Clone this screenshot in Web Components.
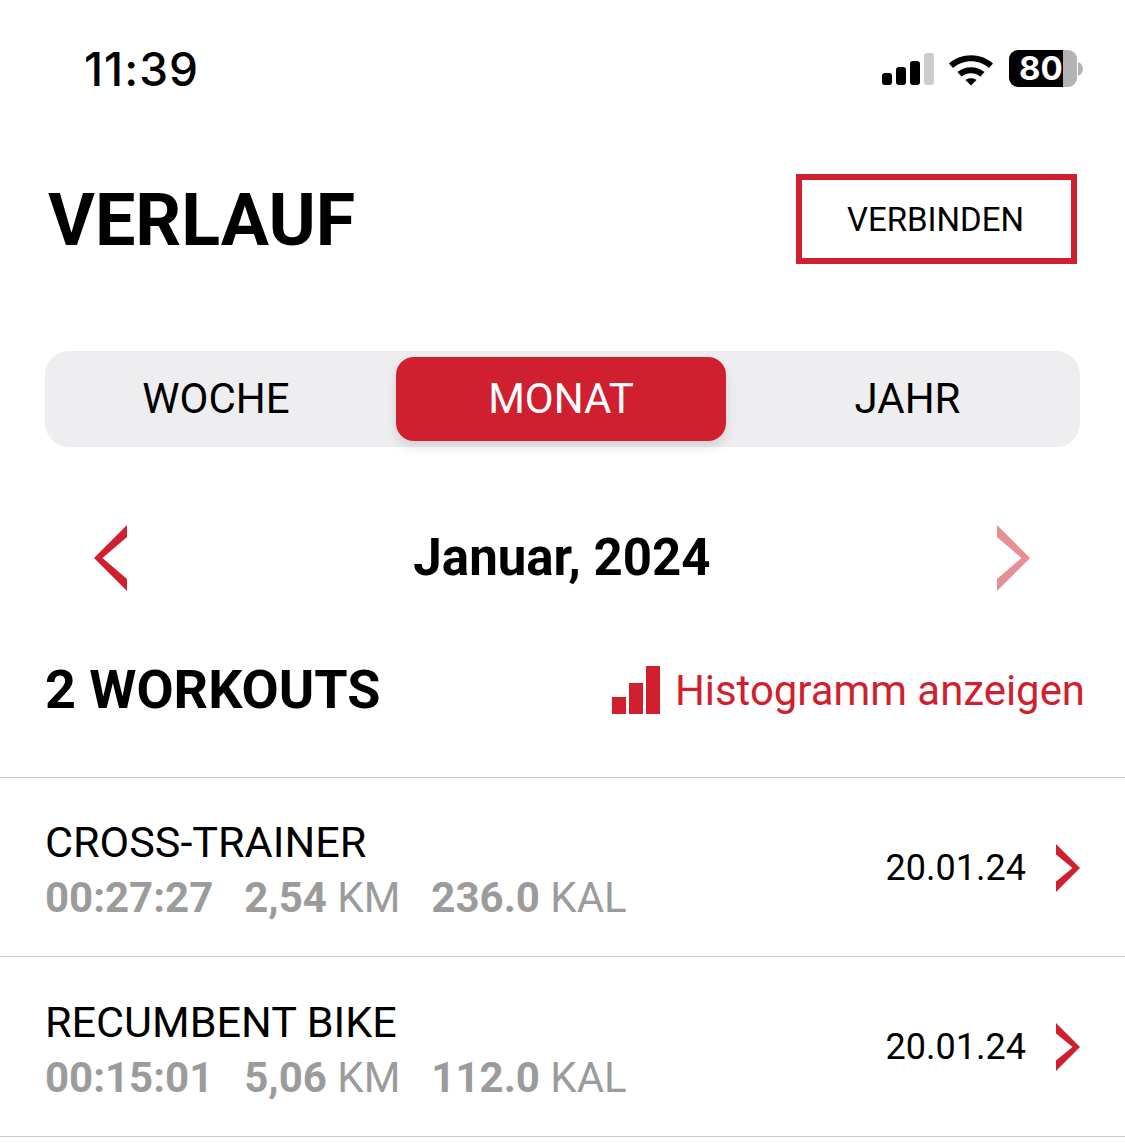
<!doctype html>
<html><head><meta charset="utf-8"><style>
html,body{margin:0;padding:0;background:#fff}
body{font-family:Roboto,sans-serif;color:#000;width:1125px;height:1144px;overflow:hidden}
</style></head><body>
<app-page></app-page>
<script>
const RED='#d01f2f';
const chev=(dir,op,h,v,i)=>{const w=h/2;const d=dir==='l'?`M${w} 0 L0 ${w} L${w} ${h} L${w} ${h-v} L${i} ${w} L${w} ${v}Z`:`M0 0 L${w} ${w} L0 ${h} L0 ${h-v} L${w-i} ${w} L0 ${v}Z`;return `<svg width="${w}" height="${h}" viewBox="0 0 ${w} ${h}" style="display:block;opacity:${op}"><path d="${d}" fill="${RED}"/></svg>`};
function def(name,html){customElements.define(name,class extends HTMLElement{constructor(){super();this.attachShadow({mode:'open'}).innerHTML=typeof html==='function'?html(this):html}})}
def('status-bar',`<style>:host{display:flex;box-sizing:border-box;height:140px;padding:44px 42px 0 84px;justify-content:space-between;align-items:flex-start}
.t{font:500 46px/50px Inter,sans-serif;letter-spacing:1px;color:#000}
.r{display:flex;align-items:center;margin-top:6px}
.bat{position:relative;width:68px;height:37px;border-radius:9px;background:linear-gradient(90deg,#000 0 54px,#b3b3b3 54px);color:#fff;font:700 33px/37px Inter,sans-serif;text-align:left;padding-left:10px;box-sizing:border-box}
</style><span class="t">11:39</span><div class="r">
<svg width="52" height="34" viewBox="0 0 52 34" style="display:block"><rect x="0" y="21" width="10" height="12" rx="3"/><rect x="14" y="15" width="10" height="18" rx="3"/><rect x="28" y="9" width="10" height="24" rx="3"/><rect x="42" y="1" width="10" height="32" rx="3" fill="#ccc"/></svg>
<svg width="46" height="34" viewBox="0 0 46 34" style="display:block;margin-left:14px"><path d="M1 11.500C13 .5 33 .5 45 11.500L41 16C31 7 15 7 5 16Z M9.500 20C17 13.500 29 13.500 36.500 20L32.500 24.500C27 20 19 20 13.500 24.500Z M17.500 28C20.500 25.500 25.500 25.500 28.500 28L23 33.500Z"/></svg>
<div class="bat" style="margin-left:15px">80</div>
<svg width="5" height="14" viewBox="0 0 5 14" style="display:block;margin-left:1px"><path d="M0 0C3 1 5 4 5 7C5 10 3 13 0 14Z" fill="#b3b3b3"/></svg>
</div>`);
def('page-head',`<style>:host{display:flex;box-sizing:border-box;height:124px;padding:34px 48px 0 48px;justify-content:space-between;align-items:flex-start}
h1{margin:2px 0 0;font:700 71.800px/90px Roboto,sans-serif}
button{box-sizing:border-box;width:281px;height:90px;border:6px solid ${RED};background:#fff;color:#000;font:400 33px/1 Roboto,sans-serif;padding:0 2px 0 0}
</style><h1>VERLAUF</h1><button>VERBINDEN</button>`);
def('seg-control',`<style>:host{display:grid;grid-template-columns:repeat(3,345px);box-sizing:border-box;width:1035px;height:96px;margin:87px 0 0 45px;background:#eeeef0;border-radius:24px;align-items:center;text-align:center;font:400 42px/84px Roboto,sans-serif}
.w{padding-right:3px}
.a{background:${RED};color:#fff;border-radius:18px;width:330px;height:84px;margin-left:6px;box-shadow:0 6px 12px rgba(0,0,0,.12)}
</style><div class="w">WOCHE</div><div class="a">MONAT</div><div>JAHR</div>`);
def('date-nav',`<style>:host{display:flex;box-sizing:border-box;margin-top:78px;height:66px;padding:0 95px 0 94px;justify-content:space-between;align-items:center;font:700 51px/66px Roboto,sans-serif}
</style>${chev('l',1,66,12,8.5)}<span>Januar, 2024</span>${chev('r',.5,66,12,8.5)}`);
def('workouts-head',`<style>:host{display:flex;box-sizing:border-box;margin-top:72px;height:54px;padding:0 40px 0 45px;justify-content:space-between;align-items:center}
b{font:700 53.900px/54px Roboto,sans-serif}
.h{display:flex;align-items:center;color:${RED};font:400 41.900px/54px Roboto,sans-serif;gap:15px}
.h span{position:relative;top:1px}
</style><b>2 WORKOUTS</b><div class="h"><svg width="48" height="48" viewBox="0 0 48 48" style="display:block"><path fill="${RED}" d="M0 31h14v17H0zM17 17h14v31H17zM34 0h14v48H34z"/></svg><span>Histogramm anzeigen</span></div>`);
def('workout-row',el=>`<style>:host{display:flex;box-sizing:border-box;height:${el.getAttribute('h')}px;border-bottom:1px solid #ccc;padding:0 45px;align-items:center;justify-content:space-between}
.l{padding-top:10px}
.n{font:400 43.100px/48px Roboto,sans-serif;color:#000;margin-top:-3px}
.s{font:400 42px/48px Roboto,sans-serif;color:#9b9b9b;display:flex;gap:31px;margin-top:7px}
.s b{font-weight:700}
.r{display:flex;align-items:center;gap:30px;font:400 36px/48px Roboto,sans-serif;padding-top:1px}
</style><div class="l"><div class="n">${el.getAttribute('name')}</div><div class="s"><span><b>${el.getAttribute('t')}</b></span><span><b>${el.getAttribute('km')}</b> KM</span><span><b>${el.getAttribute('kal')}</b> KAL</span></div></div><div class="r"><span>${el.getAttribute('date')}</span>${chev('r',1,48,10.5,7.5)}</div>`);
def('app-page',`<style>:host{display:block}.list{margin-top:60px;border-top:1px solid #ccc}</style>
<status-bar></status-bar><page-head></page-head><seg-control></seg-control><date-nav></date-nav><workouts-head></workouts-head>
<div class="list"><workout-row h="179" name="CROSS-TRAINER" t="00:27:27" km="2,54" kal="236.0" date="20.01.24"></workout-row><workout-row h="180" name="RECUMBENT BIKE" t="00:15:01" km="5,06" kal="112.0" date="20.01.24"></workout-row></div>`);
</script></body></html>
